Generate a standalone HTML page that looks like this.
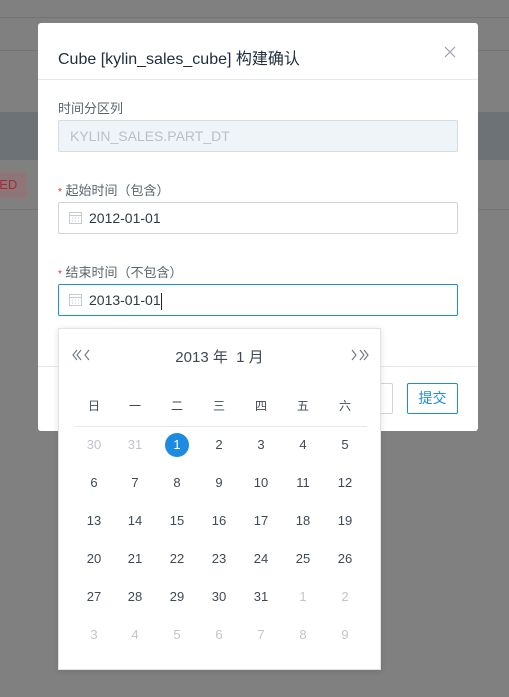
<!DOCTYPE html>
<html><head><meta charset="utf-8"><style>
*{margin:0;padding:0;box-sizing:border-box}
body{width:509px;height:697px;overflow:hidden;background:#808080;font-family:"Liberation Sans","Noto Sans CJK SC",sans-serif;position:relative}
.a{position:absolute}
.cal{position:absolute;left:58px;top:328px;width:323px;height:342px;background:#fff;border:1px solid #dfe3e8;box-shadow:0 1px 6px rgba(0,0,0,.12)}
.g{position:absolute;width:30px;height:24px;line-height:24px;text-align:center;font-size:13px;color:#3d4a56}
.m{color:#c0c4cc}
.inp{position:absolute;left:58px;width:400px;height:32px;border:1px solid #cfd4da;border-radius:2px;background:#fff;font-size:14px;color:#2c3a46}
</style></head><body>
<div class="a" style="left:0;top:17px;width:509px;height:1px;background:#737373"></div>
<div class="a" style="left:0;top:50px;width:509px;height:1px;background:#737373"></div>
<div class="a" style="left:0;top:112px;width:509px;height:48px;background:#6d7276"></div>
<div class="a" style="left:0;top:209px;width:509px;height:1px;background:#737373"></div>
<div class="a" style="left:-22px;top:173px;width:48px;height:24px;border:1px solid #a86a6e;background:#8c7679;color:#a82a36;font-size:13px;line-height:22px;padding-left:13px;border-radius:2px">LED</div>

<div class="a" style="left:38px;top:23px;width:440px;height:408px;background:#fff;border-radius:3px"></div>
<div class="a" style="left:58px;top:45px;font-size:16px;color:#1f2d3d">Cube [kylin_sales_cube] 构建确认</div>
<svg class="a" style="left:444px;top:46px" width="12" height="12" viewBox="0 0 12 12"><path d="M1 1L11 11M11 1L1 11" stroke="#9aa2ab" stroke-width="1.2"/></svg>
<div class="a" style="left:38px;top:79px;width:440px;height:1px;background:#e5e9ee"></div>
<div class="a" style="left:58px;top:98px;font-size:13px;color:#5a6570">时间分区列</div>
<div class="inp" style="top:120px;background:#eef4f7;border-color:#d6dde2;color:#b8c1c8;padding-left:11px;line-height:30px;font-size:14px">KYLIN_SALES.PART_DT</div>
<div class="a" style="left:58px;top:180px;font-size:13px;color:#5a6570"><span style="color:#f5222d;font-size:10px;">*</span> 起始时间（包含）</div>
<div class="inp" style="top:202px;line-height:30px;padding-left:30px">2012-01-01</div>
<div class="a" style="left:58px;top:262px;font-size:13px;color:#5a6570"><span style="color:#f5222d;font-size:10px;">*</span> 结束时间（不包含）</div>
<div class="inp" style="top:284px;line-height:30px;padding-left:30px;border-color:#1d8be0">2013-01-01<span style="display:inline-block;width:1px;height:17px;background:#222;vertical-align:middle"></span></div>
<svg class="a" style="left:69px;top:211px" width="13" height="13" viewBox="0 0 13 13"><rect x="0.5" y="1.5" width="12" height="11" fill="none" stroke="#c5cbd1"/><line x1="0.5" y1="4.5" x2="12.5" y2="4.5" stroke="#c5cbd1"/><path d="M3 7h1M6 7h1M9 7h1M3 10h1M6 10h1M9 10h1" stroke="#c5cbd1"/></svg>
<svg class="a" style="left:69px;top:293px" width="13" height="13" viewBox="0 0 13 13"><rect x="0.5" y="1.5" width="12" height="11" fill="none" stroke="#c5cbd1"/><line x1="0.5" y1="4.5" x2="12.5" y2="4.5" stroke="#c5cbd1"/><path d="M3 7h1M6 7h1M9 7h1M3 10h1M6 10h1M9 10h1" stroke="#c5cbd1"/></svg>
<div class="a" style="left:38px;top:366px;width:440px;height:1px;background:#e5e9ee"></div>
<div class="a" style="left:340px;top:383px;width:53px;height:31px;border:1px solid #cfd4da;border-radius:2px"></div>
<div class="a" style="left:407px;top:383px;width:51px;height:31px;border:1px solid #1d8be0;border-radius:2px;color:#1d8be0;font-size:14px;line-height:29px;text-align:center">提交</div>

<div class="cal">
<svg class="a" style="left:13px;top:20px" width="22" height="12" viewBox="0 0 22 12"><path d="M5 1L1 6L5 11M9 1L5 6L9 11M17 1L13 6L17 11" fill="none" stroke="#6a7580" stroke-width="1.1"/></svg>
<div class="a" style="left:0;width:321px;top:17px;text-align:center;font-size:15px;color:#3d4a56">2013 年&nbsp; 1 月</div>
<svg class="a" style="left:288px;top:20px" width="22" height="12" viewBox="0 0 22 12"><path d="M5 1L9 6L5 11M13 1L17 6L13 11M17 1L21 6L17 11" fill="none" stroke="#6a7580" stroke-width="1.1"/></svg>
<div class="a" style="left:16px;top:97px;width:292px;height:1px;background:#e5e9ee"></div>
</div>
<div id="grid"></div>
<script>
var xs=[94,135,177,219,261,303,345],ys=[406,445,483,521,559,597,635];
var h='',w=['日','一','二','三','四','五','六'];
for(var i=0;i<7;i++)h+='<div class="g" style="left:'+(xs[i]-15)+'px;top:'+(ys[0]-12)+'px;font-size:12px">'+w[i]+'</div>';
var d=[30,31];for(var i=1;i<=31;i++)d.push(i);for(var i=1;i<=9;i++)d.push(i);
for(var k=0;k<42;k++){var r=Math.floor(k/7)+1,c=k%7,m=(k<2||k>32);
var st='left:'+(xs[c]-15)+'px;top:'+(ys[r]-12)+'px;';
if(k==2){h+='<div class="a" style="left:'+(xs[c]-12)+'px;top:'+(ys[r]-12)+'px;width:24px;height:24px;border-radius:12px;background:#1d8be0;color:#fff;font-size:13px;line-height:24px;text-align:center">1</div>';continue;}
h+='<div class="g'+(m?' m':'')+'" style="'+st+'">'+d[k]+'</div>';}
document.getElementById('grid').innerHTML=h;
</script>
</body></html>
